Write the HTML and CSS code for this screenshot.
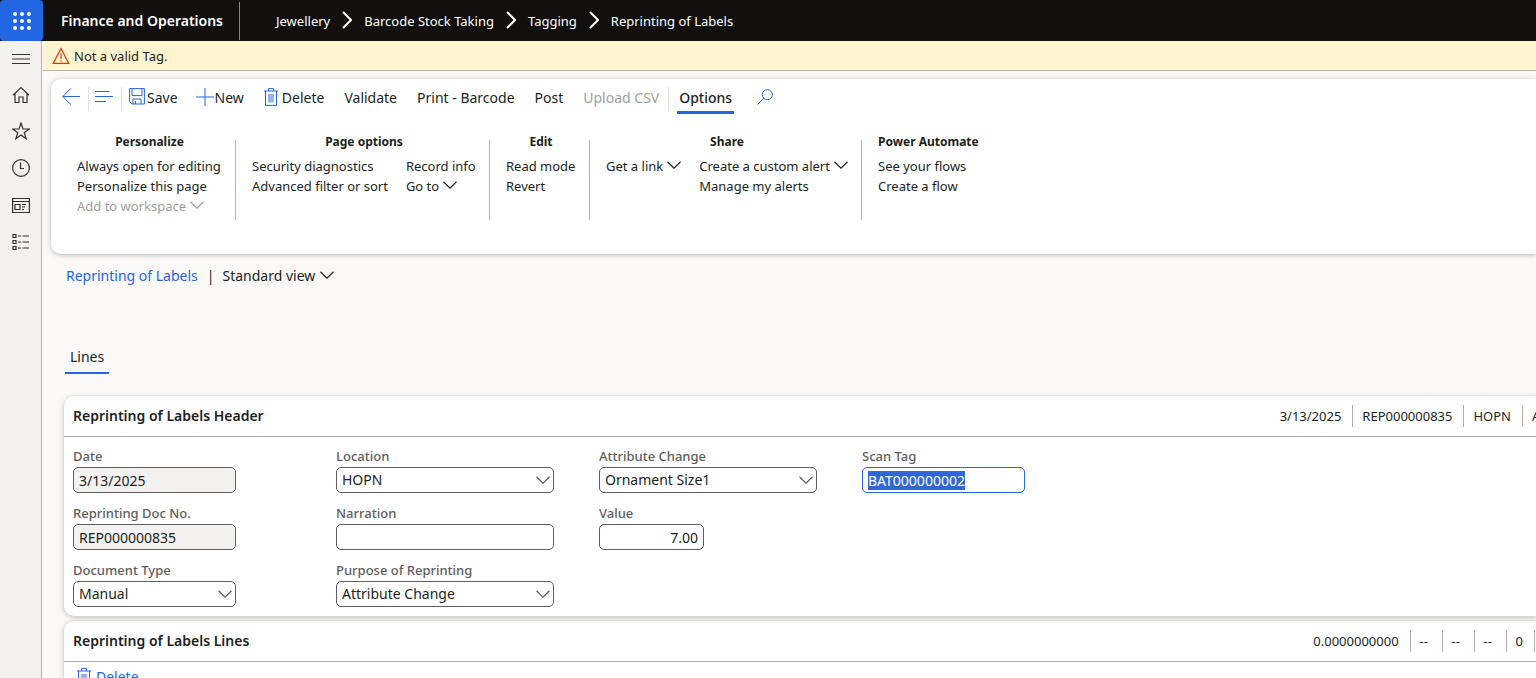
FILE: index.html
```
<!DOCTYPE html>
<html lang="en">
<head>
<meta charset="utf-8">
<title>Reprinting of Labels - Finance and Operations</title>
<link rel="stylesheet" href="styles.css">
</head>
<body>
<svg class="sprite" aria-hidden="true">
  <symbol id="chev" viewBox="0 0 14 8"><path d="M.5 .8 7 7.2 13.5 .8"/></symbol>
  <symbol id="crumb" viewBox="0 0 10 18"><path d="M1 1 9 9 1 17"/></symbol>
  <symbol id="trash" viewBox="0 0 14 18"><path d="M0 3h14M4.500 3V.6h5V3M1.500 3v14.400h11V3M5 6v8.500M7 6v8.500M9 6v8.500"/></symbol>
</svg>
<header class="topbar">
  <button class="waffle" aria-label="App launcher">
    <svg width="18" height="18" viewBox="0 0 18 18"><circle cx="2" cy="2" r="2"/><circle cx="9" cy="2" r="2"/><circle cx="16" cy="2" r="2"/><circle cx="2" cy="9" r="2"/><circle cx="9" cy="9" r="2"/><circle cx="16" cy="9" r="2"/><circle cx="2" cy="16" r="2"/><circle cx="9" cy="16" r="2"/><circle cx="16" cy="16" r="2"/></svg>
  </button>
  <div class="brand">Finance and Operations</div>
  <nav class="crumbs" aria-label="Breadcrumb">
    <a href="#">Jewellery</a>
    <svg class="crumb-icon"><use href="#crumb"/></svg>
    <a href="#">Barcode Stock Taking</a>
    <svg class="crumb-icon"><use href="#crumb"/></svg>
    <a href="#">Tagging</a>
    <svg class="crumb-icon"><use href="#crumb"/></svg>
    <a href="#">Reprinting of Labels</a>
  </nav>
</header>
<div class="shell">
  <nav class="rail" aria-label="Navigation">
    <button aria-label="Expand"><svg viewBox="0 0 18 18"><path d="M0 4.500h18M0 9h18M0 13.500h18"/></svg></button>
    <button aria-label="Home"><svg viewBox="0 0 18 18"><path d="M1 9.200 9 1.500l8 7.700M3 7.500v9h4v-5.500h4v5.500h4v-9"/></svg></button>
    <button aria-label="Favorites"><svg viewBox="0 0 18 18"><path d="M9 1 11 7h6.300l-5.100 3.700 2 6.100L9 13l-5.200 3.800 2-6.100L.7 7H7z"/></svg></button>
    <button aria-label="Recent"><svg viewBox="0 0 18 18"><circle cx="9" cy="9" r="8.400"/><path d="M8.500 3.500v6H12"/></svg></button>
    <button aria-label="Workspaces"><svg viewBox="0 0 18 18"><path d="M.6 2.500h16.800v14H.6zM.6 5.500h16.800M3 8.500h5v5H3zM10 8.500h4M10 11h3M10 13.500h2"/></svg></button>
    <button aria-label="Modules"><svg viewBox="0 0 18 18"><path d="M1 1.500h3v3H1zM1 7.500h3v3H1zM1 13.500h3v3H1zM6 3h3M10.500 3H17M6 9h3M10.500 9H17M6 15h3M10.500 15H17"/></svg></button>
  </nav>
  <main class="main">
    <div class="message" role="alert">
      <svg width="18" height="18" viewBox="0 0 18 18"><path d="M9 1.500 16.800 16.400H1.200zM9 6.500v5.500M9 13.300v1.400"/></svg>
      <span>Not a valid Tag.</span>
    </div>
    <section class="ribbon">
      <div class="toolbar">
        <div class="nav-tool"><button aria-label="Back"><svg width="18" height="18" viewBox="0 0 18 18"><path d="M18 8.500H.8M9 .3.8 8.500 9 16.700"/></svg></button></div>
        <div class="nav-tool"><button aria-label="Show list"><svg width="18" height="18" viewBox="0 0 18 18"><path d="M0 3.500h14.500M0 8.500h18M0 13.500h11"/></svg></button></div>
        <button class="tool tool-save"><svg width="16" height="17" viewBox="0 0 16 17"><path d="M.6.6h14.800v15.400H3L.6 13.600zM3 .6v7h10v-7M4 16v-5h8v5M6.500 13v3"/></svg>Save</button>
        <button class="tool tool-new"><svg width="18" height="18" viewBox="0 0 18 18"><path d="M9 0v18M0 9h18"/></svg>New</button>
        <button class="tool tool-delete"><svg width="14" height="18"><use href="#trash"/></svg>Delete</button>
        <button class="tool">Validate</button>
        <button class="tool">Print - Barcode</button>
        <button class="tool">Post</button>
        <button class="tool" disabled>Upload CSV</button>
        <div class="tab-holder"><button class="tool tool-tab">Options</button></div>
        <button class="tool find" aria-label="Search"><svg width="16" height="16" viewBox="0 0 16 16"><circle cx="10.300" cy="5.700" r="5"/><path d="M6.700 9.300.5 15.500"/></svg></button>
      </div>
      <div class="groups">
        <section class="group">
          <h2>Personalize</h2>
          <div class="cols"><div class="col">
            <button>Always open for editing</button>
            <button>Personalize this page</button>
            <button disabled>Add to workspace <svg class="chev"><use href="#chev"/></svg></button>
          </div></div>
        </section>
        <section class="group">
          <h2>Page options</h2>
          <div class="cols"><div class="col">
            <button>Security diagnostics</button>
            <button>Advanced filter or sort</button>
          </div><div class="col">
            <button>Record info</button>
            <button>Go to <svg class="chev"><use href="#chev"/></svg></button>
          </div></div>
        </section>
        <section class="group">
          <h2>Edit</h2>
          <div class="cols"><div class="col">
            <button>Read mode</button>
            <button>Revert</button>
          </div></div>
        </section>
        <section class="group">
          <h2>Share</h2>
          <div class="cols"><div class="col">
            <button>Get a link <svg class="chev"><use href="#chev"/></svg></button>
          </div><div class="col">
            <button>Create a custom alert <svg class="chev"><use href="#chev"/></svg></button>
            <button>Manage my alerts</button>
          </div></div>
        </section>
        <section class="group group-last">
          <h2>Power Automate</h2>
          <div class="cols"><div class="col">
            <button>See your flows</button>
            <button>Create a flow</button>
          </div></div>
        </section>
      </div>
    </section>
    <div class="page">
      <div class="view">
        <a href="#">Reprinting of Labels</a>
        <span>|</span>
        <button>Standard view <svg class="chev"><use href="#chev"/></svg></button>
      </div>
      <div class="tabs"><button class="tab">Lines</button></div>
      <section class="card">
        <div class="card-head">
          <h2>Reprinting of Labels Header</h2>
          <ul class="summary"><li>3/13/2025</li><li>REP000000835</li><li>HOPN</li><li class="cut">Attribute Change</li></ul>
        </div>
        <form class="form">
          <div class="form-col">
            <div class="field"><label for="date">Date</label><input id="date" value="3/13/2025" readonly></div>
            <div class="field"><label for="doc">Reprinting Doc No.</label><input id="doc" value="REP000000835" readonly></div>
            <div class="field"><label for="type">Document Type</label><div class="pick"><select id="type"><option>Manual</option></select><svg class="chev"><use href="#chev"/></svg></div></div>
          </div>
          <div class="form-col wide">
            <div class="field"><label for="loc">Location</label><div class="pick"><select id="loc"><option>HOPN</option></select><svg class="chev"><use href="#chev"/></svg></div></div>
            <div class="field"><label for="narr">Narration</label><input id="narr"></div>
            <div class="field"><label for="purpose">Purpose of Reprinting</label><div class="pick"><select id="purpose"><option>Attribute Change</option></select><svg class="chev"><use href="#chev"/></svg></div></div>
          </div>
          <div class="form-col wide">
            <div class="field"><label for="attr">Attribute Change</label><div class="pick"><select id="attr"><option>Ornament Size1</option></select><svg class="chev"><use href="#chev"/></svg></div></div>
            <div class="field"><label for="val">Value</label><input id="val" class="number" value="7.00"></div>
          </div>
          <div class="form-col">
            <div class="field"><label for="scan">Scan Tag</label><input id="scan" class="scan" value="BAT000000002"></div>
          </div>
        </form>
      </section>
      <section class="card">
        <div class="card-head">
          <h2>Reprinting of Labels Lines</h2>
          <ul class="summary"><li>0.0000000000</li><li class="blank">--</li><li class="blank">--</li><li class="blank">--</li><li>0</li><li class="cut edge"></li></ul>
        </div>
        <div class="line-tools"><button><svg width="14" height="18"><use href="#trash"/></svg>Delete</button></div>
      </section>
    </div>
  </main>
</div>
<script src="app.js"></script>
</body>
</html>
```

FILE: styles.css
```
* { box-sizing: border-box; }
body { margin: 0; height: 100vh; display: flex; flex-direction: column; overflow: hidden; background: #faf9f8; color: #201f1e; font: 14px/20px "Noto Sans", sans-serif; }
button { font: inherit; color: inherit; background: none; border: 0; padding: 0; text-align: left; white-space: nowrap; }
button:disabled { color: #a19f9d; }
a { color: inherit; text-decoration: none; }
h2 { margin: 0; }
svg { fill: none; stroke: currentColor; flex: none; }
.sprite { display: none; }
.chev { width: 14px; height: 8px; margin-bottom: 2px; stroke-width: 1.2; }

.topbar { flex: none; height: 41px; display: flex; align-items: center; background: #11100f; color: #fff; white-space: nowrap; }
.waffle { width: 43px; height: 41px; display: flex; align-items: center; justify-content: center; background: #2266e3; border-radius: 4px; }
.waffle svg { stroke: none; fill: #fff; }
.brand { width: 197px; height: 38px; padding-left: 18px; line-height: 38px; font-weight: 600; border-right: 1px solid #8a8886; }
.crumbs { display: flex; align-items: center; gap: 12px; padding-left: 36px; font-size: 13px; }
.crumb-icon { width: 10px; height: 18px; margin-bottom: 2px; stroke-width: 2; }

.shell { flex: 1; min-height: 0; display: flex; }
.rail { flex: none; width: 42px; display: flex; flex-direction: column; background: #f3f2f1; border-right: 1px solid #b3b0ad; }
.rail button { height: 36px; display: flex; align-items: center; justify-content: center; color: #323130; }
.rail button:nth-child(n+4) { height: 37px; }
.rail svg { width: 18px; height: 18px; stroke-width: 1.2; }
.main { flex: 1; min-width: 0; padding-left: 1px; overflow: hidden; }

.message { height: 30px; display: flex; align-items: center; gap: 4px; padding-left: 9px; background: #fff4ce; border-bottom: 1px solid #b3b0ad; font-size: 13px; }
.message svg { color: #d83b01; stroke-width: 1.2; }

.ribbon { margin: 8px 0 0 8px; min-height: 175px; background: #fff; border-radius: 10px 0 0 10px; box-shadow: 0 1px 5px rgba(0,0,0,.26); }
.toolbar { display: flex; align-items: flex-start; padding: 8px 0 0 11px; height: 45px; }
.toolbar svg { color: #2266e3; }
.nav-tool { height: 24px; padding-right: 8px; margin-right: 6px; border-right: 1px solid #e1dfdd; }
.nav-tool button { display: flex; padding-top: 1px; }
.tool { display: flex; align-items: center; gap: 3px; height: 20px; margin: 1px 20px 0 0; }
.tool svg { margin-bottom: 3px; }
.tool-save { margin-left: 1px; margin-right: 18px; gap: 2px; }
.tool-new { gap: 1px; }
.tool-delete { gap: 4px; }
.tool:disabled { margin-right: 9px; }
.tab-holder { height: 24px; border-left: 1px solid #e1dfdd; padding-left: 8px; }
.tool-tab { height: 26px; padding: 0 2px 3px; margin-right: 23px; font-weight: 500; border-bottom: 3px solid #2266e3; }
.groups { display: grid; grid-template-columns: 175px 254px 100px 272px auto; justify-content: start; padding: 8px 0 0 10px; }
.group { height: 88px; padding: 0 0 0 16px; background: linear-gradient(#b3b0ad, #b3b0ad) right 8px / 1px 80px no-repeat; }
.group-last { background: none; }
.group h2 { margin: 0 0 4px -14px; text-align: center; font-size: 12px; line-height: 20px; font-weight: 700; }
.group-last h2 { margin-left: 0; }
.cols { display: flex; gap: 18px; }
.col { display: flex; flex-direction: column; font-size: 13px; }
.col button { display: flex; align-items: center; gap: 4px; }

.page { padding-left: 21px; }
.view { display: flex; gap: 8px; padding: 12px 0 0 2px; }
.view span { padding-left: 1px; }
.view a { color: #2266e3; }
.view button { display: flex; align-items: center; gap: 5px; }
.tabs { padding: 61px 0 0 1px; }
.tab { display: block; padding: 0 5px 5px; border-bottom: 2px solid #2266e3; }
.card { background: #fff; border-radius: 10px 0 0 10px; box-shadow: 0 1px 5px rgba(0,0,0,.26); margin-top: 5px; }
.tabs + .card { margin-top: 22px; }
.card-head { height: 41px; display: flex; align-items: center; justify-content: space-between; padding-left: 9px; border-bottom: 1px solid #b3b0ad; }
.card-head h2 { font-size: 14px; line-height: 20px; font-weight: 600; }
.summary { display: flex; margin: 0; padding: 0; list-style: none; font-size: 13px; line-height: 22px; }
.summary li { padding: 0 11px 0 9px; border-right: 1px solid #b3b0ad; white-space: nowrap; }
.summary .blank { width: 32px; }
.summary .cut { width: 13px; padding-right: 0; overflow: hidden; border: 0; }
.summary .edge { width: 1px; padding: 0; }

.form { display: flex; padding: 9px 0 9px 9px; }
.form-col { width: 263px; display: flex; flex-direction: column; gap: 10px; }
.field { width: 163px; }
.wide .field { width: 218px; }
.field label { display: block; margin-bottom: 1px; font-size: 13px; font-weight: 500; color: #605e5c; }
.field input, .field select { display: block; width: 100%; height: 26px; padding: 0 5px; font: inherit; color: #201f1e; background: #fff; border: 1px solid #605e5c; border-radius: 5px; outline: 0; appearance: none; }
.field input:read-only { background: #f3f2f1; }
.field .number { width: 105px; text-align: right; }
.field .scan { border-color: #2266e3; }
.scan::selection { background: #3067d4; color: #fff; }
.pick { display: grid; align-items: center; }
.pick > * { grid-area: 1 / 1; }
.pick .chev { justify-self: end; margin: 0 4px 0 0; color: #605e5c; pointer-events: none; }
.line-tools { padding: 5px 0 0 13px; height: 60px; color: #2266e3; }
.line-tools button { display: flex; align-items: center; gap: 5px; }
```

FILE: app.js
```
const scan = document.getElementById("scan");
scan.focus();
scan.select();
```
